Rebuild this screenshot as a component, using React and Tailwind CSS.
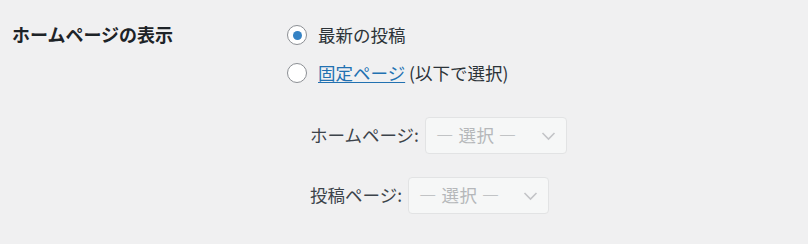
import React from 'react';

const jp = { fontFamily: '"Noto Sans CJK JP", "Noto Sans", sans-serif' };

function Radio({ checked }) {
  return (
    <span className="w-5 h-5 rounded-full border border-[#8c8f94] bg-white flex items-center justify-center shrink-0">
      {checked && <span className="w-[9px] h-[9px] rounded-full bg-[#3582c4]" />}
    </span>
  );
}

function DisabledSelect({ width }) {
  return (
    <div className={`${width} h-[37px] rounded-[4px] border border-[#e2e3e4] bg-[#f6f7f7] flex items-center justify-between pl-[10px] pr-[10px]`}>
      <span className="text-[17.5px] text-[#b5b7ba] tracking-[0.5px]">― 選択 ―</span>
      <svg width="15" height="10" viewBox="0 0 15 10" fill="none">
        <path d="M1.5 2 L7.5 8 L13.5 2" stroke="#c3c4c7" strokeWidth="1.6" />
      </svg>
    </div>
  );
}

export default function App() {
  return (
    <div className="w-[808px] h-[244px] bg-[#f0f0f1] flex text-[#1d2327]" style={jp}>
      <div className="w-[287px] pl-3 pt-[23px] shrink-0">
        <h2 className="text-[18px] font-bold leading-[22px]">ホームページの表示</h2>
      </div>

      <div className="pt-[25px] flex flex-col">
        <label className="flex items-center gap-[11px] h-5">
          <Radio checked />
          <span className="text-[17.5px] leading-5 text-[#2c3338]">最新の投稿</span>
        </label>
        <label className="flex items-center gap-[11px] h-5 mt-[18px]">
          <Radio />
          <span className="text-[17.5px] leading-5 text-[#2c3338]">
            <a className="text-[#2271b1] underline underline-offset-2">固定ページ</a> (以下で選択)
          </span>
        </label>

        <div className="pl-[23px] mt-[34px] flex flex-col gap-[23px]">
          <div className="flex items-center gap-[6px]">
            <span className="text-[17.5px] text-[#3c434a]">ホームページ:</span>
            <DisabledSelect width="w-[142px]" />
          </div>
          <div className="flex items-center gap-[6px]">
            <span className="text-[17.5px] text-[#3c434a]">投稿ページ:</span>
            <DisabledSelect width="w-[141px]" />
          </div>
        </div>
      </div>
    </div>
  );
}
